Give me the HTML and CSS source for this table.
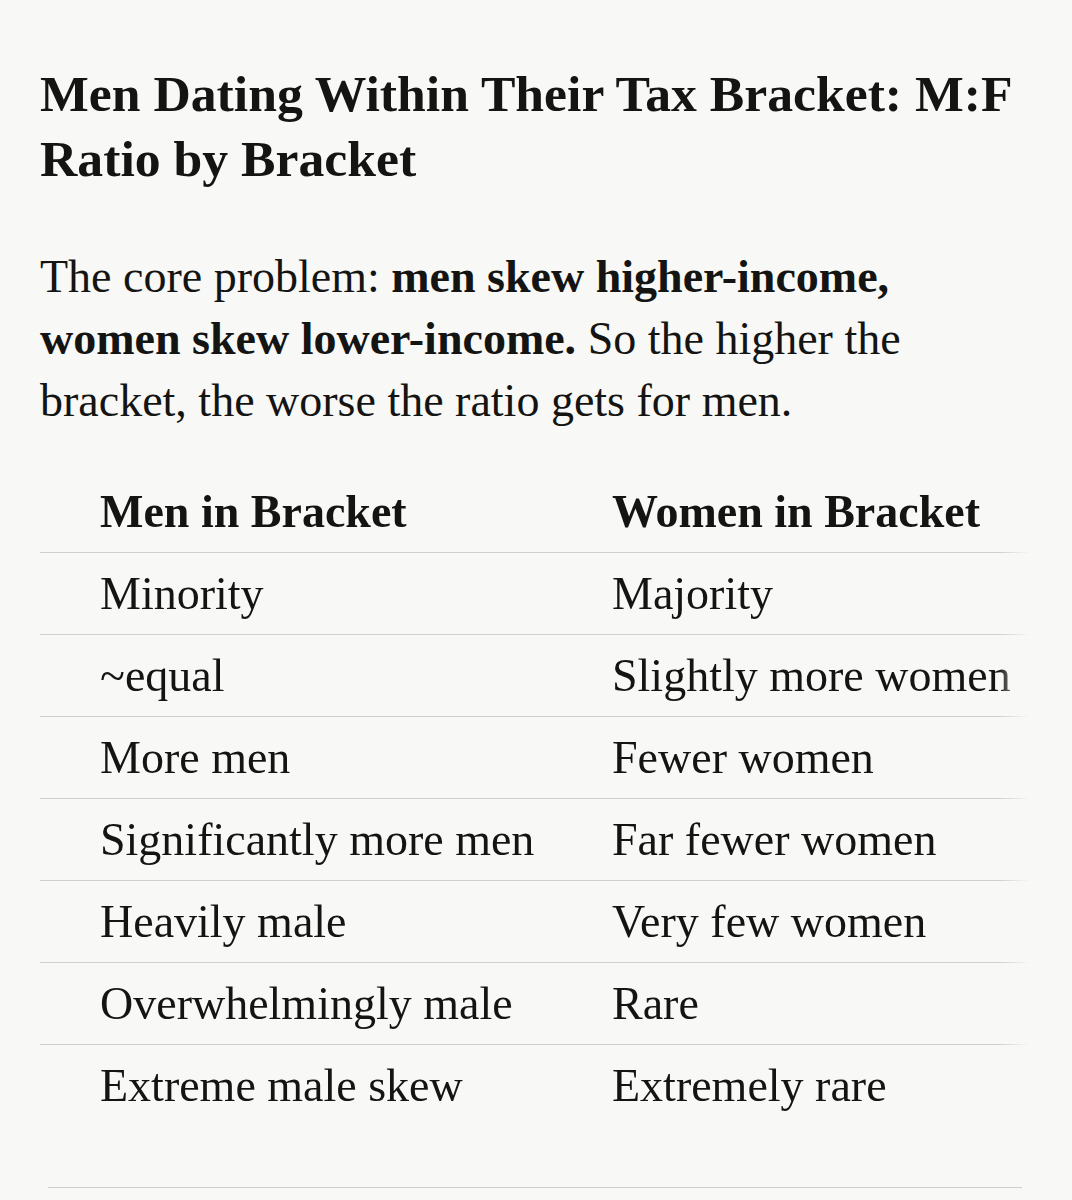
FILE: index.html
```html
<!DOCTYPE html>
<html lang="en">
<head>
<meta charset="utf-8">
<title>Men Dating Within Their Tax Bracket</title>
<link rel="stylesheet" href="styles.css">
</head>
<body>
<main class="answer">
  <h1 class="title">Men Dating Within Their Tax Bracket: M:F Ratio by Bracket</h1>
  <p class="lead">The core problem: <strong>men skew higher-income, women skew lower-income.</strong> So the higher the bracket, the worse the ratio gets for men.</p>
  <div class="table-wrap">
    <table class="ratio-table">
      <thead>
        <tr><th>Men in Bracket</th><th>Women in Bracket</th></tr>
      </thead>
      <tbody>
        <tr><td>Minority</td><td>Majority</td></tr>
        <tr><td>~equal</td><td>Slightly more women</td></tr>
        <tr><td>More men</td><td>Fewer women</td></tr>
        <tr><td>Significantly more men</td><td>Far fewer women</td></tr>
        <tr><td>Heavily male</td><td>Very few women</td></tr>
        <tr><td>Overwhelmingly male</td><td>Rare</td></tr>
        <tr><td>Extreme male skew</td><td>Extremely rare</td></tr>
      </tbody>
    </table>
  </div>
  <hr class="divider">
</main>
</body>
</html>
```

FILE: styles.css
```css
html, body {
  margin: 0;
  padding: 0;
  background: #f8f8f6;
}

body {
  color: #141413;
  font-family: "Liberation Serif", "Times New Roman", serif;
}

.answer {
  padding: 61px 42px 0 40px;
}

.title {
  margin: 0;
  font-size: 51.7px;
  line-height: 65px;
  font-weight: 700;
}

.lead {
  margin: 55px 0 0;
  font-size: 46px;
  line-height: 62px;
}

.lead strong {
  font-weight: 700;
}

.table-wrap {
  margin-top: 39px;
  overflow: hidden;
  -webkit-mask-image: linear-gradient(to right, #000 calc(100% - 32px), transparent);
  mask-image: linear-gradient(to right, #000 calc(100% - 32px), transparent);
}

.ratio-table {
  border-collapse: collapse;
  width: 1100px;
  font-size: 46px;
  line-height: 62px;
  text-align: left;
}

.ratio-table th,
.ratio-table td {
  padding: 10px 0 9px 60px;
  white-space: nowrap;
  vertical-align: top;
}

.ratio-table th:first-child,
.ratio-table td:first-child {
  width: 452px;
}

.ratio-table th {
  font-weight: 700;
}

.ratio-table thead tr,
.ratio-table tbody tr:not(:last-child) {
  border-bottom: 1px solid #cfcfcb;
}

.divider {
  margin: 61px 8px 0 8px;
  border: 0;
  border-top: 1px solid #cfcfcb;
  height: 0;
}
```
